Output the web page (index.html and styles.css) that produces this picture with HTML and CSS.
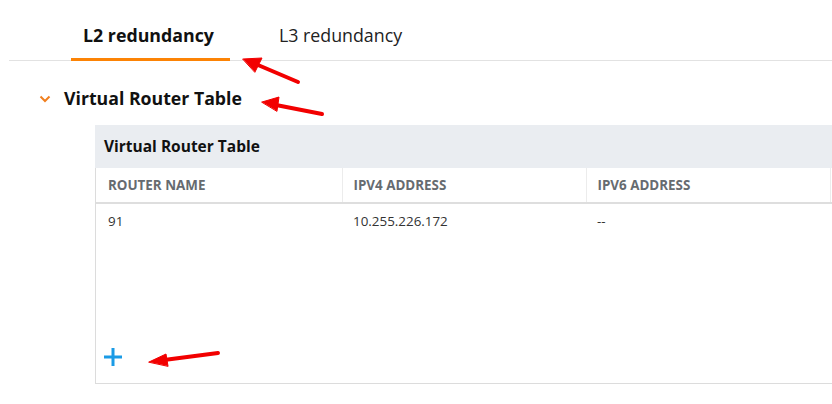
FILE: index.html
```html
<!DOCTYPE html>
<html lang="en">
<head>
<meta charset="UTF-8">
<title>Redundancy</title>
<link rel="stylesheet" href="styles.css">
</head>
<body>
<div class="tabs">
    <div class="tab active">L2 redundancy</div>
    <div class="tab">L3 redundancy</div>
</div>

<div class="section">
    <div class="section-title">
        <svg class="chevron" width="12" height="8" viewBox="0 0 12 8"><path d="M1.5 1.5 L6 6 L10.5 1.5" fill="none" stroke="#f07f1f" stroke-width="2"/></svg>
        <span>Virtual Router Table</span>
    </div>

    <div class="panel">
        <div class="panel-head">Virtual Router Table</div>
        <table class="grid">
            <thead>
                <tr>
                    <th>Router Name</th>
                    <th>IPv4 Address</th>
                    <th>IPv6 Address</th>
                    <th></th>
                </tr>
            </thead>
            <tbody>
                <tr>
                    <td>91</td>
                    <td>10.255.226.172</td>
                    <td>--</td>
                    <td></td>
                </tr>
            </tbody>
        </table>
        <div class="panel-foot">
            <svg class="add" width="20" height="20" viewBox="0 0 20 20"><path d="M10 1 V19 M1 10 H19" stroke="#1a9be6" stroke-width="3"/></svg>
        </div>
    </div>
</div>

<!-- annotations -->
<svg class="marks" width="832" height="404" viewBox="0 0 832 404">
    <g stroke="#f20000" stroke-width="4" stroke-linecap="round" fill="#f20000">
        <line x1="298" y1="82" x2="258" y2="65"/>
        <polygon points="243,59 262,58 255,72" stroke-width="1"/>
        <line x1="322" y1="114" x2="276" y2="105"/>
        <polygon points="262,102 279,97 277,111" stroke-width="1"/>
        <line x1="218" y1="353" x2="164" y2="360"/>
        <polygon points="149,362 166,354 168,366" stroke-width="1"/>
    </g>
</svg>
</body>
</html>
```

FILE: styles.css
```css
body {
    margin: 0;
    font-family: "Open Sans", "Noto Sans", Arial, sans-serif;
    color: #111;
    background-color: #fff;
    width: 832px;
    height: 404px;
    overflow: hidden;
    position: relative;
}
.tabs {
    display: flex;
    gap: 37px;
    margin-left: 9px;
    padding-left: 62px;
    border-bottom: 1px solid #e2e2e2;
    height: 61px;
    box-sizing: border-box;
}
.tab {
    font-size: 17.8px;
    line-height: 30px;
    padding: 20px 16px 0 12px;
    color: #222;
    margin-bottom: -1px;
    border-bottom: 3px solid transparent;
}
.tab.active {
    font-weight: 700;
    color: #111;
    border-bottom-color: #fc8305;
}
.section {
    padding-top: 24px;
}
.section-title {
    display: flex;
    align-items: center;
    gap: 13px;
    padding-left: 39px;
    font-size: 17.7px;
    font-weight: 700;
    line-height: 26px;
}
.chevron {
    margin-top: 1px;
}
.panel {
    margin: 14px 0 0 95px;
    width: 800px;
    border-left: 1px solid #dcdcdc;
    border-bottom: 1px solid #dcdcdc;
}
.panel-head {
    background-color: #eaedf1;
    height: 43px;
    line-height: 43px;
    padding-left: 9px;
    font-size: 15.5px;
    font-weight: 700;
    margin-left: -1px;
}
.grid {
    border-collapse: collapse;
    width: 799px;
    table-layout: fixed;
}
.grid th {
    height: 35px;
    text-align: left;
    padding: 0 0 0 12px;
    font-size: 13.4px;
    font-weight: 700;
    text-transform: uppercase;
    color: #666b70;
    border-right: 1px solid #ececec;
    border-bottom: 2px solid #dedede;
    box-sizing: border-box;
}
.grid th:nth-child(1) {
    width: 246px;
}
.grid th:nth-child(2),
.grid th:nth-child(3) {
    width: 244px;
    padding-left: 11px;
}
.grid th:last-child {
    border-right: none;
}
.grid td {
    height: 34px;
    padding: 0 0 0 12px;
    font-size: 13.4px;
    color: #333;
}
.grid td:nth-child(2),
.grid td:nth-child(3) {
    padding-left: 11px;
}
.panel-foot {
    height: 145px;
    display: flex;
    align-items: flex-end;
    padding: 0 0 16px 7px;
    box-sizing: border-box;
}
.marks {
    position: absolute;
    left: 0;
    top: 0;
}
```
